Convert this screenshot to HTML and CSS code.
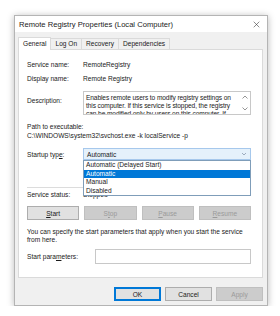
FILE: index.html
```html
<!DOCTYPE html>
<html>
<head>
<meta charset="utf-8">
<link rel="stylesheet" href="styles.css">
</head>
<body>
<div class="window">
  <div class="titlebar">
    <span class="title">Remote Registry Properties (Local Computer)</span>
    <svg class="close" viewBox="0 0 10 10"><path d="M1 1L9 9M9 1L1 9" stroke="#333" stroke-width="0.8" fill="none"/></svg>
  </div>
  <div class="content">
    <div class="tabs">
      <div class="tab active">General</div>
      <div class="tab">Log On</div>
      <div class="tab">Recovery</div>
      <div class="tab">Dependencies</div>
    </div>
    <div class="panel">
      <div class="field"><span class="label">Service name:</span><span>RemoteRegistry</span></div>
      <div class="field f2"><span class="label">Display name:</span><span>Remote Registry</span></div>
      <div class="field desc">
        <span class="label desc-label">Description:</span>
        <div class="textbox">
          <div class="text">Enables remote users to modify registry settings on<br>this computer. If this service is stopped, the registry<br>can be modified only by users on this computer. If</div>
          <div class="scroll">
            <svg viewBox="0 0 8 6"><path d="M1.5 4.5L4 2L6.5 4.5" stroke="#7a7a7a" stroke-width="0.8" fill="none"/></svg>
            <svg viewBox="0 0 8 6"><path d="M1.5 1.5L4 4L6.5 1.5" stroke="#7a7a7a" stroke-width="0.8" fill="none"/></svg>
          </div>
        </div>
      </div>
      <div class="path-label">Path to executable:</div>
      <div class="path">C:\WINDOWS\system32\svchost.exe -k localService -p</div>
      <div class="field startup">
        <span class="label">Startup typ<u>e</u>:</span>
        <div class="combo-wrap">
          <div class="combo"><span>Automatic</span><svg viewBox="0 0 8 6"><path d="M2 2L4 4L6 2" stroke="#8a9ab0" stroke-width="0.8" fill="none"/></svg></div>
          <ul class="dropdown">
            <li>Automatic (Delayed Start)</li>
            <li class="selected">Automatic</li>
            <li>Manual</li>
            <li>Disabled</li>
          </ul>
        </div>
      </div>
      <div class="sep"></div>
      <div class="field status"><span class="label">Service status:</span><span>Stopped</span></div>
      <div class="svc-buttons">
        <div class="btn"><u>S</u>tart</div>
        <div class="btn disabled">S<u>t</u>op</div>
        <div class="btn disabled"><u>P</u>ause</div>
        <div class="btn disabled"><u>R</u>esume</div>
      </div>
      <p class="hint">You can specify the start parameters that apply when you start the service<br>from here.</p>
      <div class="field params"><span class="label">Start para<u>m</u>eters:</span><div class="input"></div></div>
    </div>
    <div class="footer">
      <div class="btn default">OK</div>
      <div class="btn">Cancel</div>
      <div class="btn disabled">Apply</div>
    </div>
  </div>
</div>
</body>
</html>
```

FILE: styles.css
```css
* { box-sizing: border-box; }
html, body { margin: 0; background: #fff; }
body {
  padding: 15px 0 0 14px;
  font-family: "Liberation Sans", Arial, sans-serif;
  font-size: 6.6px;
  color: #1a1a1a;
}
u { text-decoration: underline; text-underline-offset: 1px; }
.window {
  width: 254px;
  height: 291px;
  border: 1px solid #b4b4b4;
  box-shadow: 0 1px 7px rgba(0,0,0,0.28);
  background: #f0f0f0;
  display: flex;
  flex-direction: column;
}
.titlebar {
  height: 16px;
  background: #fff;
  display: flex;
  align-items: center;
  justify-content: space-between;
  padding: 0 7px 0 4px;
  font-size: 7.6px;
}
.close { width: 7px; height: 7px; }
.content {
  flex: 1;
  display: flex;
  flex-direction: column;
  padding: 5px 4px 0 3px;
}
.tabs {
  display: flex;
  align-items: flex-end;
  height: 12px;
  padding-left: 1px;
}
.tab {
  height: 11px;
  line-height: 10px;
  padding: 0 4px;
  border: 1px solid #dadada;
  border-bottom: none;
  margin-left: -1px;
}
.tab.active {
  background: #fff;
  height: 13px;
  line-height: 11px;
  margin-bottom: -1px;
  position: relative;
  z-index: 1;
  padding: 0 4px;
}
.panel {
  height: 229px;
  background: #fff;
  border: 1px solid #dadada;
  padding: 10px 11px 0 8px;
  display: flex;
  flex-direction: column;
}
.field {
  display: grid;
  grid-template-columns: 56px 1fr;
  align-items: center;
  line-height: 9px;
}
.f2 { margin-top: 5px; }
.desc { margin-top: 8px; align-items: start; }
.desc-label { margin-top: 5px; }
.textbox {
  height: 24px;
  border: 1px solid #c8c8c8;
  display: flex;
  overflow: hidden;
}
.text {
  flex: 1;
  white-space: nowrap;
  line-height: 8.2px;
  letter-spacing: -0.1px;
  padding: 2px 0 0 2px;
  overflow: hidden;
}
.scroll {
  width: 9px;
  display: flex;
  flex-direction: column;
  justify-content: space-between;
  padding: 2px 0;
}
.scroll svg { width: 8px; height: 6px; }
.path-label { margin-top: 7px; line-height: 9px; }
.path { line-height: 9px; }
.startup { margin-top: 8px; }
.combo-wrap { position: relative; }
.combo {
  height: 12px;
  background: #e5f1fb;
  border: 1px solid #a6c8ec;
  display: flex;
  align-items: center;
  justify-content: space-between;
  padding: 0 2px 0 3px;
}
.combo svg { width: 8px; height: 6px; }
.dropdown {
  position: absolute;
  top: 100%;
  left: 0;
  right: 0;
  margin: 0;
  padding: 0;
  list-style: none;
  background: #fff;
  border: 1px solid #7f9db9;
  z-index: 5;
}
.dropdown li {
  height: 8.5px;
  line-height: 8.5px;
  padding-left: 2px;
}
.dropdown li.selected { background: #0078d7; color: #fff; }
.sep {
  height: 1px;
  background: #dcdcdc;
  margin-top: 27px;
}
.status { margin-top: 2px; }
.svc-buttons {
  display: grid;
  grid-template-columns: repeat(4, 1fr);
  gap: 5px;
  margin-top: 7px;
}
.btn {
  height: 14px;
  display: flex;
  align-items: center;
  justify-content: center;
  background: #e1e1e1;
  border: 1px solid #adadad;
}
.btn.disabled {
  background: #cccccc;
  border-color: #bfbfbf;
  color: #9a9a9a;
}
.btn.default { border-color: #0078d7; box-shadow: inset 0 0 0 1px #0078d7; }
.hint { margin: 8px 0 0; line-height: 8px; }
.params { grid-template-columns: 68px 1fr; margin-top: 5px; }
.input { height: 15px; border: 1px solid #c8c8c8; background: #fff; }
.footer {
  display: flex;
  justify-content: flex-end;
  gap: 4px;
  margin-top: 9px;
}
.footer .btn { width: 47px; }
```
